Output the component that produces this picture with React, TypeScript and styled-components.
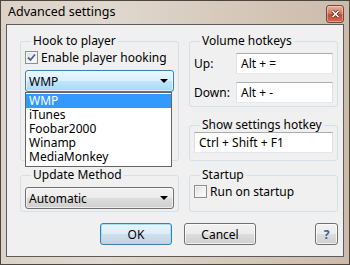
import React from 'react';
import styled, { createGlobalStyle } from 'styled-components';

const GlobalStyle = createGlobalStyle`
  html, body {
    margin: 0;
    padding: 0;
    background: #fff;
  }
  body {
    font-family: "Noto Sans", "Liberation Sans", sans-serif;
    font-size: 12px;
    color: #000;
  }
`;

const Window = styled.div`
  width: 350px;
  height: 265px;
  box-sizing: border-box;
  display: flex;
  flex-direction: column;
  border: 1px solid #4d4640;
  padding: 0 5px 7px 5px;
  background: linear-gradient(to right, #dcd2c8 0%, #e0d8cf 30%, #d5c7b9 70%, #cbbbab 100%);
`;

const TitleBar = styled.div`
  height: 23px;
  display: flex;
  justify-content: space-between;
  align-items: flex-start;
  padding-left: 2px;
`;

const Title = styled.span`
  margin-top: 3px;
  font-size: 12.5px;
  line-height: 16px;
  color: #000;
`;

const CloseButton = styled.div`
  width: 18px;
  height: 18px;
  margin-top: 4px;
  box-sizing: border-box;
  border: 1px solid #6e4a40;
  border-radius: 3px;
  display: flex;
  align-items: center;
  justify-content: center;
  background: linear-gradient(#eab0a0 0%, #d8765e 45%, #c94a30 55%, #d86a4c 100%);
  box-shadow: inset 0 0 0 1px rgba(255, 255, 255, 0.35);
`;

const Client = styled.div`
  flex: 1;
  border: 1px solid #5c5c5c;
  background: #f0f0f0;
  display: grid;
  grid-template-columns: 159px 149px;
  grid-template-rows: 127px 44px auto;
  column-gap: 10px;
  row-gap: 7px;
  padding: 9px 5px 0 13px;
`;

const Group = styled.fieldset<{ $h: number }>`
  margin: 0;
  min-width: 0;
  box-sizing: border-box;
  height: ${p => p.$h}px;
  border: 1px solid #d5dfe5;
  border-radius: 3px;
  padding: 0 4px;
  position: relative;
`;

const Legend = styled.legend`
  font-size: 12px;
  line-height: 14px;
  padding: 0 2px;
  margin-left: 6px;
`;

const Stack = styled.div`
  display: flex;
  flex-direction: column;
  justify-content: space-between;
`;

const CheckRow = styled.label`
  display: flex;
  align-items: center;
  gap: 3px;
  height: 15px;
  margin-top: 2px;
  line-height: 15px;
  white-space: nowrap;
`;

const Box = styled.span`
  width: 13px;
  height: 13px;
  box-sizing: border-box;
  border: 1px solid #8e8f8f;
  background: linear-gradient(135deg, #dcdcdc 0%, #f4f4f4 60%, #fdfdfd 100%);
  box-shadow: inset 0 0 0 1px #f4f4f4;
  display: flex;
  align-items: center;
  justify-content: center;
  flex: none;
`;

const ComboWrap = styled.div`
  position: relative;
  margin-top: 5px;
`;

const Combo = styled.div<{ $focused?: boolean }>`
  height: 22px;
  box-sizing: border-box;
  border: 1px solid ${p => (p.$focused ? '#3c7fb1' : '#707070')};
  border-radius: 3px;
  display: flex;
  align-items: center;
  justify-content: space-between;
  padding: 0 4px 0 3px;
  background: ${p =>
    p.$focused
      ? 'linear-gradient(#eaf6fd 0%, #d9f0fc 50%, #bee6fd 50%, #a7d9f5 100%)'
      : 'linear-gradient(#f2f2f2 0%, #ebebeb 50%, #dddddd 50%, #cfcfcf 100%)'};
  box-shadow: inset 0 0 0 1px rgba(255, 255, 255, 0.6);
`;

const Arrow = styled.span`
  width: 0;
  height: 0;
  border-left: 4px solid transparent;
  border-right: 4px solid transparent;
  border-top: 4px solid #000;
  margin-right: 1px;
`;

const DropList = styled.ul`
  position: absolute;
  top: 100%;
  left: 0;
  width: 147px;
  margin: 0;
  padding: 1px 0 2px;
  list-style: none;
  background: #fff;
  border: 1px solid #646464;
  box-sizing: border-box;
  z-index: 2;
`;

const DropItem = styled.li<{ $selected?: boolean }>`
  height: 14px;
  line-height: 14px;
  padding-left: 3px;
  background: ${p => (p.$selected ? '#3399ff' : 'transparent')};
  color: ${p => (p.$selected ? '#fff' : '#000')};
`;

const FieldRow = styled.div<{ $gap: number }>`
  display: flex;
  align-items: center;
  justify-content: space-between;
  margin-top: ${p => p.$gap}px;
`;

const Input = styled.div<{ $w: number }>`
  width: ${p => p.$w}px;
  height: 21px;
  box-sizing: border-box;
  background: #fff;
  border: 1px solid #dbdfe6;
  border-top-color: #abadb3;
  border-bottom-color: #e3e9ef;
  padding-left: 4px;
  line-height: 19px;
  white-space: nowrap;
`;

const Buttons = styled.div`
  grid-column: 1 / span 2;
  display: flex;
  padding-left: 80px;
  gap: 12px;
  margin-top: 4px;
  height: 22px;
`;

const Button = styled.div<{ $default?: boolean; $w: number }>`
  width: ${p => p.$w}px;
  height: 22px;
  box-sizing: border-box;
  border: 1px solid ${p => (p.$default ? '#3c7fb1' : '#707070')};
  border-radius: 3px;
  display: flex;
  align-items: center;
  justify-content: center;
  background: ${p =>
    p.$default
      ? 'linear-gradient(#eaf6fd 0%, #dcecf7 50%, #cfdfeb 50%, #c3d3df 100%)'
      : 'linear-gradient(#f2f2f2 0%, #ebebeb 50%, #dddddd 50%, #cfcfcf 100%)'};
  box-shadow: inset 0 0 0 1px ${p => (p.$default ? 'rgba(160, 220, 250, 0.9)' : 'rgba(255, 255, 255, 0.7)')};
`;

const HelpButton = styled(Button)`
  margin-left: auto;
  color: #3a5d8c;
  font-weight: bold;
`;

const Check = () => (
  <svg width="9" height="9" viewBox="0 0 9 9">
    <path d="M1 4.5 L3.5 7 L8 1.5" fill="none" stroke="#4a5f97" strokeWidth="1.8" />
  </svg>
);

const players = ['WMP', 'iTunes', 'Foobar2000', 'Winamp', 'MediaMonkey'];

const App: React.FC = () => {
  return (
    <>
      <GlobalStyle />
      <Window>
        <TitleBar>
          <Title>Advanced settings</Title>
          <CloseButton>
            <svg width="9" height="8" viewBox="0 0 9 8">
              <path d="M1.5 1 L7.5 7 M7.5 1 L1.5 7" stroke="#3b2a28" strokeWidth="3" />
              <path d="M1.5 1 L7.5 7 M7.5 1 L1.5 7" stroke="#fff" strokeWidth="1.6" />
            </svg>
          </CloseButton>
        </TitleBar>
        <Client>
          <Group $h={127}>
            <Legend>Hook to player</Legend>
            <CheckRow>
              <Box><Check /></Box>
              Enable player hooking
            </CheckRow>
            <ComboWrap>
              <Combo $focused>
                WMP
                <Arrow />
              </Combo>
              <DropList>
                {players.map((p, i) => (
                  <DropItem key={p} $selected={i === 0}>{p}</DropItem>
                ))}
              </DropList>
            </ComboWrap>
          </Group>
          <Stack>
            <Group $h={73}>
              <Legend>Volume hotkeys</Legend>
              <FieldRow $gap={5}>
                Up:
                <Input $w={97}>Alt + =</Input>
              </FieldRow>
              <FieldRow $gap={8}>
                Down:
                <Input $w={97}>Alt + -</Input>
              </FieldRow>
            </Group>
            <Group $h={43}>
              <Legend>Show settings hotkey</Legend>
              <Input $w={139}>Ctrl + Shift + F1</Input>
            </Group>
          </Stack>
          <Group $h={44}>
            <Legend>Update Method</Legend>
            <ComboWrap>
              <Combo>
                Automatic
                <Arrow />
              </Combo>
            </ComboWrap>
          </Group>
          <Group $h={44}>
            <Legend>Startup</Legend>
            <CheckRow>
              <Box />
              Run on startup
            </CheckRow>
          </Group>
          <Buttons>
            <Button $default $w={72}>OK</Button>
            <Button $w={72}>Cancel</Button>
            <HelpButton $w={23}>?</HelpButton>
          </Buttons>
        </Client>
      </Window>
    </>
  );
};

export default App;
